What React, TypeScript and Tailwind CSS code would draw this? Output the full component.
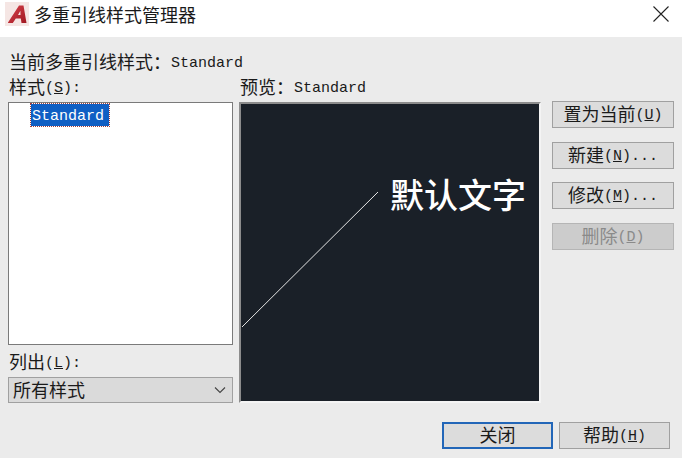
import React from "react";

const cjk = "font-['Noto_Sans_CJK_SC',sans-serif]";
const mono = "font-['Liberation_Mono','Noto_Sans_CJK_SC',monospace]";

function C({ children }: { children: React.ReactNode }) {
  return <span className={`${cjk} text-[18px]`}>{children}</span>;
}
function L({ children }: { children: React.ReactNode }) {
  return <span className={`${mono} text-[15px] -translate-y-[2px]`}>{children}</span>;
}
function Btn({ zh, k, tail, disabled, primary }: { zh: string; k?: string; tail?: string; disabled?: boolean; primary?: boolean }) {
  return (
    <div
      className={`flex items-baseline justify-center whitespace-pre border h-[27px] ${
        primary ? "border-2 border-[#2266b8] bg-[#dcdcdc] leading-[20px]" : disabled ? "border-[#b5b5b5] bg-[#cccccc] text-[#8a8a8a] leading-[22px]" : "border-[#a0a0a0] bg-[#dcdcdc] text-[#1a1a1a] leading-[22px]"
      }`}
    >
      <C>{zh}</C>
      {k && (
        <L>
          (<span className="underline">{k}</span>)
        </L>
      )}
      {tail && <L>{tail}</L>}
    </div>
  );
}

export default function App() {
  return (
    <div className="w-[682px] h-[458px] overflow-hidden bg-[#ebebeb] text-[#1a1a1a] flex flex-col">
      <div className="h-[37px] bg-white flex items-start shrink-0 pl-[5px] pr-[13px] pt-[2px]">
        <svg width="24" height="24" viewBox="0 0 24 24" className="shrink-0">
          <defs>
            <linearGradient id="a" x1="0" y1="0" x2="1" y2="1">
              <stop offset="0" stopColor="#d8434c" />
              <stop offset="1" stopColor="#a01822" />
            </linearGradient>
          </defs>
          <rect width="24" height="24" fill="#f5e6e4" />
          <path d="M3 20.5 L14 3.5 H18.5 L21.5 21 H16.5 L15.8 16.5 H10.8 L7.8 21 H3 Z" fill="url(#a)" />
          <path d="M13 13 L15.4 8.8 L15.5 13 Z" fill="#f5e6e4" />
        </svg>
        <span className={`${cjk} text-[18px] ml-[5px] leading-[24px]`}>多重引线样式管理器</span>
        <svg width="16" height="16" viewBox="0 0 16 16" className="ml-auto mt-[4px]" stroke="#222" strokeWidth="1.1" fill="none">
          <path d="M0.5 0.5 L15.5 15.5 M15.5 0.5 L0.5 15.5" />
        </svg>
      </div>

      <div className="flex-1 flex flex-col pl-[8px] pr-[8px] min-h-0">
        <div className="h-[25px] mt-[13px] pl-[1px] flex items-baseline whitespace-pre leading-[23px]">
          <C>当前多重引线样式：</C>
          <L>Standard</L>
        </div>
        <div className="flex items-stretch">
          <div className="w-[225px] flex flex-col shrink-0">
            <div className="h-[27px] pl-[1px] flex items-baseline whitespace-pre leading-[23px]">
              <C>样式</C>
              <L>
                (<span className="underline">S</span>):
              </L>
            </div>
            <div className="h-[243px] bg-white border border-[#7a7a7a] pl-[22px] pt-[1px]">
              <div className={`w-fit h-[22px] bg-[#0f5fc4] text-white ${mono} text-[15px] leading-[25px] pl-[1px] pr-[5px] outline-1 outline-dotted outline-[#a04040]`}>Standard</div>
            </div>
            <div className="h-[32px] pl-[1px] flex items-baseline whitespace-pre leading-[32px]">
              <C>列出</C>
              <L>
                (<span className="underline">L</span>):
              </L>
            </div>
            <div className="h-[26px] border border-[#a0a0a0] bg-[#dadada] flex items-center pl-[4px] pr-[6px] pb-[2px] leading-none">
              <C>所有样式</C>
              <svg width="12" height="8" viewBox="0 0 12 8" className="ml-auto mt-[2px]" fill="none" stroke="#444" strokeWidth="1.1">
                <path d="M1 1.5 L6 6.5 L11 1.5" />
              </svg>
            </div>
          </div>

          <div className="w-[302px] ml-[6px] flex flex-col shrink-0">
            <div className="h-[27px] pl-[1px] flex items-baseline whitespace-pre leading-[23px]">
              <C>预览：</C>
              <L>Standard</L>
            </div>
            <div className="relative h-[301px] bg-[#1a2028] border-2 border-[#f4f4f4] border-t-[#8c8c8c] border-l-[#8c8c8c]">
              <svg width="298" height="297" viewBox="0 0 298 297" className="absolute left-0 top-0" fill="none" stroke="#e4e4e4" strokeWidth="1">
                <path d="M1 223 L137 88" />
              </svg>
              <span className={`absolute left-[149px] top-[68px] ${cjk} text-white text-[34px] font-medium leading-[44px] whitespace-pre`}>默认文字</span>
            </div>
          </div>

          <div className="w-[122px] ml-[11px] pt-[26px] flex flex-col gap-[13.6px] shrink-0">
            <Btn zh="置为当前" k="U" />
            <Btn zh="新建" k="N" tail="..." />
            <Btn zh="修改" k="M" tail="..." />
            <Btn zh="删除" k="D" disabled />
          </div>
        </div>
        <div className="flex justify-end gap-[6px] mt-[19px] pr-[4px]">
          <div className="w-[111px]"><Btn zh="关闭" primary /></div>
          <div className="w-[111px]"><Btn zh="帮助" k="H" /></div>
        </div>
      </div>
    </div>
  );
}
